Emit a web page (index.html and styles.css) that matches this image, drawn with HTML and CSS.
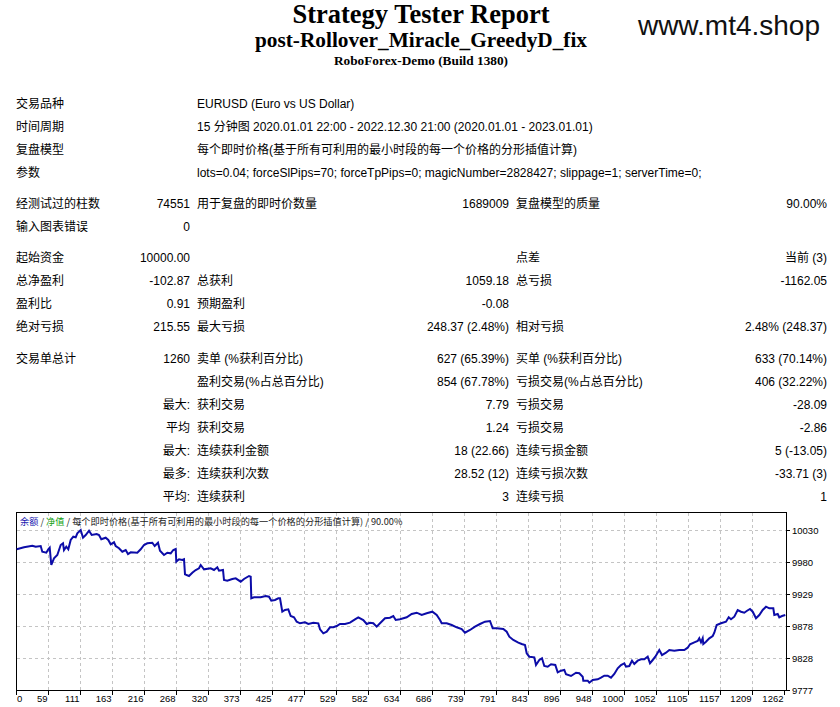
FILE: index.html
```html
<!DOCTYPE html>
<html>
<head>
<meta charset="utf-8">
<link rel="stylesheet" href="styles.css">
</head>
<body>
<div class="header">
  <div class="side"></div>
  <div class="titles">
    <div class="t1">Strategy Tester Report</div>
    <div class="t2">post-Rollover_Miracle_GreedyD_fix</div>
    <div class="t3">RoboForex-Demo (Build 1380)</div>
  </div>
  <div class="side right"><span class="logo">www.mt4.shop</span></div>
</div>

<div class="report">
  <div class="row"><div class="c1">交易品种</div><div class="wide">EURUSD (Euro vs US Dollar)</div></div>
  <div class="row"><div class="c1">时间周期</div><div class="wide">15 分钟图 2020.01.01 22:00 - 2022.12.30 21:00 (2020.01.01 - 2023.01.01)</div></div>
  <div class="row"><div class="c1">复盘模型</div><div class="wide">每个即时价格(基于所有可利用的最小时段的每一个价格的分形插值计算)</div></div>
  <div class="row"><div class="c1">参数</div><div class="wide">lots=0.04; forceSlPips=70; forceTpPips=0; magicNumber=2828427; slippage=1; serverTime=0;</div></div>
  <div class="gap"></div>
  <div class="row"><div>经测试过的柱数</div><div class="num">74551</div><div>用于复盘的即时价数量</div><div class="num">1689009</div><div>复盘模型的质量</div><div class="num">90.00%</div></div>
  <div class="row"><div>输入图表错误</div><div class="num">0</div><div></div><div></div><div></div><div></div></div>
  <div class="gap"></div>
  <div class="row"><div>起始资金</div><div class="num">10000.00</div><div></div><div></div><div>点差</div><div class="num">当前 (3)</div></div>
  <div class="row"><div>总净盈利</div><div class="num">-102.87</div><div>总获利</div><div class="num">1059.18</div><div>总亏损</div><div class="num">-1162.05</div></div>
  <div class="row"><div>盈利比</div><div class="num">0.91</div><div>预期盈利</div><div class="num">-0.08</div><div></div><div></div></div>
  <div class="row"><div>绝对亏损</div><div class="num">215.55</div><div>最大亏损</div><div class="num">248.37 (2.48%)</div><div>相对亏损</div><div class="num">2.48% (248.37)</div></div>
  <div class="gap gap-last"></div>
  <div class="row"><div>交易单总计</div><div class="num">1260</div><div>卖单 (%获利百分比)</div><div class="num">627 (65.39%)</div><div>买单 (%获利百分比)</div><div class="num">633 (70.14%)</div></div>
  <div class="row"><div></div><div></div><div>盈利交易(%占总百分比)</div><div class="num">854 (67.78%)</div><div>亏损交易(%占总百分比)</div><div class="num">406 (32.22%)</div></div>
  <div class="row"><div></div><div class="num">最大:</div><div>获利交易</div><div class="num">7.79</div><div>亏损交易</div><div class="num">-28.09</div></div>
  <div class="row"><div></div><div class="num">平均</div><div>获利交易</div><div class="num">1.24</div><div>亏损交易</div><div class="num">-2.86</div></div>
  <div class="row"><div></div><div class="num">最大:</div><div>连续获利金额</div><div class="num">18 (22.66)</div><div>连续亏损金额</div><div class="num">5 (-13.05)</div></div>
  <div class="row"><div></div><div class="num">最多:</div><div>连续获利次数</div><div class="num">28.52 (12)</div><div>连续亏损次数</div><div class="num">-33.71 (3)</div></div>
  <div class="row"><div></div><div class="num">平均:</div><div>连续获利</div><div class="num">3</div><div>连续亏损</div><div class="num">1</div></div>
</div>

<svg class="chart" width="840" height="198" viewBox="0 509 840 198" xmlns="http://www.w3.org/2000/svg">
  <g class="grid" stroke="#c4c4c4" stroke-width="1" stroke-dasharray="3 3" fill="none">
    <path d="M48.5 513V691M80.5 513V691M112.5 513V691M144.5 513V691M176.5 513V691M208.5 513V691M240.5 513V691M272.5 513V691M304.5 513V691M336.5 513V691M368.5 513V691M400.5 513V691M432.5 513V691M464.5 513V691M496.5 513V691M528.5 513V691M560.5 513V691M592.5 513V691M624.5 513V691M656.5 513V691M688.5 513V691M720.5 513V691M752.5 513V691"/>
    <path d="M17 530.5H787M17 562.5H787M17 594.5H787M17 626.5H787M17 658.5H787"/>
  </g>
  <rect x="16.5" y="512.5" width="770" height="178" fill="none" stroke="#000" stroke-width="1"/>
  <g stroke="#000" stroke-width="1">
    <path d="M16.5 691V695M48.5 691V695M80.5 691V695M112.5 691V695M144.5 691V695M176.5 691V695M208.5 691V695M240.5 691V695M272.5 691V695M304.5 691V695M336.5 691V695M368.5 691V695M400.5 691V695M432.5 691V695M464.5 691V695M496.5 691V695M528.5 691V695M560.5 691V695M592.5 691V695M624.5 691V695M656.5 691V695M688.5 691V695M720.5 691V695M752.5 691V695M784.5 691V695"/>
    <path d="M787 530.5H790M787 562.5H790M787 594.5H790M787 626.5H790M787 658.5H790M787 690.5H790"/>
  </g>
  <text class="legend" x="20" y="524.5"><tspan fill="#1818b0">余额</tspan><tspan fill="#333"> / </tspan><tspan fill="#10a010">净值</tspan><tspan fill="#222"> / 每个即时价格(基于所有可利用的最小时段的每一个价格的分形插值计算) / 90.00%</tspan></text>
  <polyline fill="none" stroke="#0c0ca8" stroke-width="2" stroke-linejoin="miter" points="16.7,549.3 24,547.3 32.3,545.7 35.7,546.7 40.7,546 42.3,551.7 46.3,552.7 48.3,549.3 49.7,547.7 51.3,565 54,558.3 57.3,555 60.7,545 63,543.3 64,550 66.3,546.7 68.3,549.3 70.7,540 73.3,536.7 75.7,537.3 77.3,533.3 80.7,530 83,537.7 85.7,535 89,530.7 91.7,535 96.7,534 99,535 101.3,539.3 105.7,537.7 108.3,540 110.7,544.3 114,542.3 115.7,546 119,548.3 122.3,551.7 125.7,550 128,554 130.7,552.3 137.3,552.7 140.7,549.3 144,545 147.3,543.3 152.3,542.7 154.7,546 158,542.7 160,550.7 164,555 167.3,552.7 170.7,553.3 173.3,550 175.7,549 176.3,561.7 179,559.3 182.3,560 184,559.3 185,574.3 189,576 192.3,572.7 195.7,570 199,568.3 200.7,565 204,569.3 210.7,568.3 214,570 217.3,567.3 219,570.7 223,570 224,580 227.3,580.7 232.3,579 235.7,578.3 240.7,581.7 244,579 249,576 250.7,576.7 251.3,598.3 254,597.3 260.7,597.3 265.7,596 269,596.7 271.3,600.7 275,600 278.3,598.3 280,598.3 282.3,611.7 285,610 288.3,609.3 290.7,616 294,617.3 296.7,621.7 300,623.3 305,622.3 308.3,624 313.3,622.7 318.3,623.3 320,629.3 323.3,633.3 326.7,631.7 330,627.3 333.3,627.3 336.7,626 340,624 345,624 350,622.7 355,619.3 358.3,617.3 363.3,620 366.7,624 370,622.7 373.3,623.3 376.7,626.7 380,623.3 385,618.3 390,617.7 393.3,616 395.7,620 400,619.3 406.7,617.3 411.7,614 416.7,612.7 421.7,615 426.7,613.3 432.3,611.7 436.7,615 440,620 441.7,623.3 446.7,623.3 451.7,625 456.7,627.3 461.7,629 465,632.7 470,630 475,626.7 480,624 485,621.7 490,621 492.7,628.3 496.7,628.3 503.3,629 506.7,631.7 509.3,636.7 513.3,640 518.3,642.7 521.7,644 525,645 526.7,653.3 529.3,656.7 534.3,657.3 536,665 539.3,660 542,658.3 544.3,666 547.7,666.7 551,664.3 555.3,665 557.7,672.3 561,670.7 564.3,670 566,674.3 571,676 576,672.7 579.3,673.3 582.7,676.7 583.3,680.7 587.7,680.7 589.3,682.7 592.7,680 597.7,679.3 601,677.7 604.3,675.7 607.7,675.7 611,677.7 614.3,674 617.7,668.3 621,665 624.3,663.3 626,666.7 629.3,666 632,660.7 634.3,664 637.7,660.7 641,659.3 644.3,659.3 647.7,656.7 650,663.3 652.7,660 655.3,656.7 659.3,650 662,655 666,652.7 669.3,650 674.3,650.7 679.3,650 684.3,650 687.7,647.7 690,644.3 694.3,642.3 697.7,641 699.3,638.3 701,642.3 702.7,638.3 703.3,644 706,641.7 709.3,638.3 712.7,636 714.3,632.7 716.7,625 721,623.3 726,621.7 728.7,617.3 731,619.3 734.3,616.7 737.7,610 741,611.7 744.3,612.7 746.7,611 750,609 752.7,611.7 756,618.3 759.3,615 762.7,610 766,606.7 769.3,608.3 773.3,608.3 774.3,615 777.7,614 779.3,617.3 782,616 785.3,615"/>
  <g class="axis">
    <text x="17" y="702">0</text>
    <text class="end" x="47.5" y="702">59</text>
    <text class="end" x="79.5" y="702">111</text>
    <text class="end" x="111.5" y="702">163</text>
    <text class="end" x="143.5" y="702">216</text>
    <text class="end" x="175.5" y="702">268</text>
    <text class="end" x="207.5" y="702">320</text>
    <text class="end" x="239.5" y="702">373</text>
    <text class="end" x="271.5" y="702">425</text>
    <text class="end" x="303.5" y="702">477</text>
    <text class="end" x="335.5" y="702">529</text>
    <text class="end" x="367.5" y="702">582</text>
    <text class="end" x="399.5" y="702">634</text>
    <text class="end" x="431.5" y="702">686</text>
    <text class="end" x="463.5" y="702">739</text>
    <text class="end" x="495.5" y="702">791</text>
    <text class="end" x="527.5" y="702">843</text>
    <text class="end" x="559.5" y="702">896</text>
    <text class="end" x="591.5" y="702">948</text>
    <text class="end" x="623.5" y="702">1000</text>
    <text class="end" x="655.5" y="702">1052</text>
    <text class="end" x="687.5" y="702">1105</text>
    <text class="end" x="719.5" y="702">1157</text>
    <text class="end" x="751.5" y="702">1209</text>
    <text class="end" x="783.5" y="702">1262</text>
    <text x="792" y="534">10030</text>
    <text x="792" y="566">9980</text>
    <text x="792" y="598">9929</text>
    <text x="792" y="630">9878</text>
    <text x="792" y="662">9828</text>
    <text x="792" y="694">9777</text>
  </g>
</svg>
</body>
</html>
```

FILE: styles.css
```css
html, body {
  margin: 0;
  padding: 0;
  background: #fff;
  color: #000;
}

body {
  width: 840px;
  height: 707px;
  overflow: hidden;
  font-family: "Liberation Sans", "Noto Sans CJK SC", sans-serif;
  font-size: 12px;
}

.header {
  display: grid;
  grid-template-columns: 1fr auto 1fr;
  height: 93px;
}

.titles {
  text-align: center;
  font-family: "Liberation Serif", "Noto Sans CJK SC", serif;
  font-weight: bold;
  padding-top: 0;
  padding-left: 2px;
}

.t1 {
  font-size: 26.5px;
  line-height: 28px;
}

.t2 {
  font-size: 21.3px;
  line-height: 24px;
}

.t3 {
  font-size: 13.3px;
  line-height: 17px;
}

.side.right {
  display: flex;
  justify-content: flex-end;
  padding-right: 20px;
  padding-top: 10px;
}

.logo {
  font-family: "Liberation Sans", sans-serif;
  font-size: 28px;
  line-height: 32px;
  color: #111;
  align-self: flex-start;
}

.report {
  padding-left: 16px;
}

.row {
  display: grid;
  grid-template-columns: 100px 67px 150px 155px 150px 154px;
  column-gap: 7px;
  height: 23px;
  line-height: 23px;
  white-space: nowrap;
}

.c1 {
  grid-column: 1 / 3;
}

.wide {
  grid-column: 3 / 7;
}

.num {
  text-align: right;
}

.gap {
  height: 8px;
}

.gap-last {
  height: 9px;
}

.chart {
  display: block;
}

.legend {
  font-family: "Noto Sans CJK SC", "Liberation Sans", sans-serif;
  font-size: 9.2px;
}

.axis text {
  font-family: "Liberation Sans", sans-serif;
  font-size: 9.5px;
  fill: #000;
}

.axis text.end {
  text-anchor: end;
}
```
